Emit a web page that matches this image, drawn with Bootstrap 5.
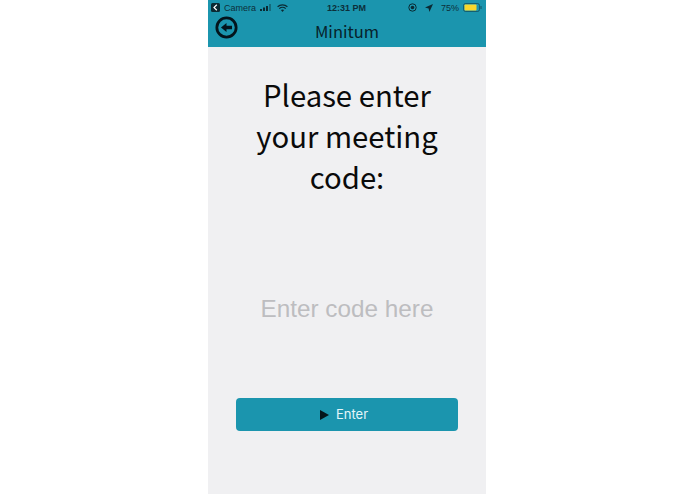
<!DOCTYPE html>
<html lang="en">
<head>
    <meta charset="UTF-8">
    <meta name="viewport" content="width=device-width, initial-scale=1.0">
    <title>Minitum</title>
    <link rel="stylesheet" href="https://cdn.jsdelivr.net/npm/bootstrap@5.3.0/dist/css/bootstrap.min.css">
    <style>
        html, body { height: 100%; background: #fff; overflow: hidden; }
        .phone-frame { width: 278px; height: 494px; margin-left: 208px; background: #f0f0f2; }
        .app-head { background: #1b95ae; height: 47px; }
        .status-line { height: 15px; padding: 0 4px 0 3px; font: 9px/14px "Liberation Sans", sans-serif; color: #0c2f3a; }
        .status-side { width: 110px; gap: 4px; }
        .title-line { height: 32px; }
        .back-btn { left: 7px; top: -2px; }
        .app-title { font: 400 16.5px/26px "Noto Sans CJK JP", sans-serif; color: #07222b; margin-top: 3px; }
        .ask-text { font: 400 29.3px/41px "Noto Sans CJK JP", sans-serif; color: #0a0a0a; margin: 27px 0 0; }
        .code-input { font: 400 24.3px/30px "Liberation Sans", sans-serif; color: #bdbdc0; background: transparent; border: 0; outline: 0; width: 100%; text-align: center; margin-top: 97px; padding: 0; }
        .code-input::placeholder { color: #bdbdc0; opacity: 1; }
        .enter-btn { width: 222px; height: 33px; margin: 74px auto 0; background: #1b95ae; border: 0; border-radius: 4px; color: #e4f6fa; font: 400 13px/33px Inter, sans-serif; padding: 0 6px 0 0; gap: 7px; }
        .enter-btn:hover { background: #1b95ae; color: #e4f6fa; }
    </style>
</head>
<body>

<div class="phone-frame d-flex flex-column">
    <div class="app-head">
        <div class="status-line d-flex justify-content-between align-items-center">
            <div class="status-side d-flex align-items-center">
                <svg width="9" height="9" viewBox="0 0 9 9"><rect width="9" height="9" rx="1.5" fill="#0b2a33"/><path d="M5.8 1.8 3 4.5l2.8 2.7" fill="none" stroke="#fff" stroke-width="1.2"/></svg>
                <span>Camera</span>
                <svg width="13" height="7" viewBox="0 0 13 7" fill="#0b2a33"><rect y="5" width="2" height="2"/><rect x="3" y="3.5" width="2" height="3.5"/><rect x="6" y="2" width="2" height="5"/><rect x="9" y="0" width="2" height="7" opacity=".4"/></svg>
                <svg width="11" height="8" viewBox="0 0 11 8" fill="none" stroke="#0b2a33" stroke-width="1.2"><path d="M.6 2.8a7 7 0 0 1 9.8 0M2.3 4.6a4.6 4.6 0 0 1 6.4 0"/><path d="M5.5 8 3.9 6.1a2.4 2.4 0 0 1 3.2 0z" fill="#0b2a33" stroke="none"/></svg>
            </div>
            <span class="fw-bold">12:31 PM</span>
            <div class="status-side d-flex align-items-center justify-content-end">
                <svg width="9" height="9" viewBox="0 0 9 9"><circle cx="4.5" cy="4.5" r="3.7" fill="none" stroke="#0b2a33"/><circle cx="4.5" cy="4.5" r="1.8" fill="#0b2a33"/></svg>
                <svg class="ms-1" width="8" height="8" viewBox="0 0 8 8"><path d="M8 0 0 3.6l3.6.8.8 3.6z" fill="#0b2a33"/></svg>
                <span class="ms-1">75%</span>
                <svg width="19" height="9" viewBox="0 0 19 9"><rect x=".5" y=".5" width="16" height="8" rx="2" fill="none" stroke="#0b2a33" stroke-opacity=".5"/><rect x="1.5" y="1.5" width="12" height="6" rx=".8" fill="#f7d72c"/><rect x="17.4" y="3" width="1.2" height="3" fill="#0b2a33" fill-opacity=".5"/></svg>
            </div>
        </div>
        <div class="title-line position-relative text-center">
            <span class="back-btn position-absolute">
                <svg class="d-block" width="23" height="23" viewBox="0 0 25 25"><circle cx="12.5" cy="12.5" r="10.5" fill="none" stroke="#03141c" stroke-width="3"/><path d="M6.5 12.5 12.5 7.5v3h6v4h-6v3z" fill="#03141c"/></svg>
            </span>
            <div class="app-title">Minitum</div>
        </div>
    </div>

    <div class="d-flex flex-column px-4 text-center">
        <h1 class="ask-text">Please enter<br>your meeting<br>code:</h1>
        <input class="code-input" type="text" placeholder="Enter code here">
        <button class="btn enter-btn d-flex justify-content-center align-items-center" type="button">
            <svg width="9" height="10" viewBox="0 0 9 10"><path d="M0 0 9 5 0 10z" fill="#05161c"/></svg>
            <span>Enter</span>
        </button>
    </div>
</div>

<script src="https://cdn.jsdelivr.net/npm/bootstrap@5.3.0/dist/js/bootstrap.bundle.min.js"></script>
</body>
</html>
